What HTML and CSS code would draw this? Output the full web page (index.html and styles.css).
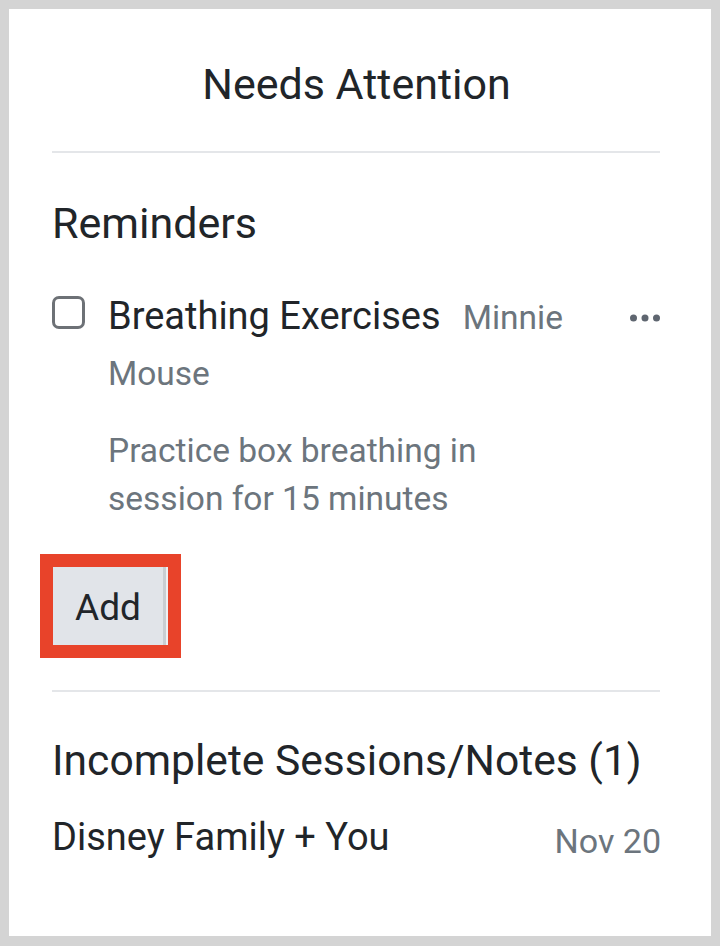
FILE: index.html
```html
<!DOCTYPE html>
<html lang="en">
<head>
<meta charset="utf-8">
<title>Needs Attention</title>
<link rel="stylesheet" href="styles.css">
</head>
<body>
<div class="card">
  <h1 class="title">Needs Attention</h1>
  <hr class="divider">
  <section class="section">
    <h2 class="section-title">Reminders</h2>
    <div class="reminder">
      <span class="checkbox" role="checkbox" aria-checked="false"></span>
      <div class="reminder-body">
        <p class="reminder-head"><span class="reminder-name">Breathing Exercises</span><span class="reminder-client">Minnie Mouse</span></p>
        <p class="reminder-desc">Practice box breathing in session for 15 minutes</p>
      </div>
      <button class="more" aria-label="More options">
        <svg width="32" height="8" viewBox="0 0 32 8" aria-hidden="true">
          <circle cx="3.5" cy="4" r="3.5" fill="#5f6670"/>
          <circle cx="15" cy="4" r="3.5" fill="#5f6670"/>
          <circle cx="26.5" cy="4" r="3.5" fill="#5f6670"/>
        </svg>
      </button>
    </div>
    <div class="add-highlight">
      <button class="add-btn">Add</button>
    </div>
  </section>
  <hr class="divider divider-lower">
  <section class="section">
    <h2 class="section-title section-title-sessions">Incomplete Sessions/Notes (1)</h2>
    <div class="session-row">
      <span class="session-name">Disney Family + You</span>
      <span class="session-date">Nov 20</span>
    </div>
  </section>
</div>
</body>
</html>
```

FILE: styles.css
```css
html, body {
  margin: 0;
  padding: 0;
}

body {
  background: #d4d4d4;
  font-family: Roboto, "Liberation Sans", sans-serif;
  color: #212529;
}

.card {
  box-sizing: border-box;
  margin: 9px 9px 10px 9px;
  height: 927px;
  background: #ffffff;
  padding: 50px 50px 0 43px;
}

.title {
  margin: 0;
  font-size: 43px;
  line-height: 50px;
  font-weight: 400;
  text-align: center;
}

.divider {
  margin: 42px 1px 0 0;
  border: 0;
  border-top: 2px solid #e4e6e9;
  height: 0;
}

.divider-lower {
  margin-top: 32px;
}

.section-title {
  margin: 45px 0 0 0;
  font-size: 43px;
  line-height: 50px;
  font-weight: 400;
}

.section-title-sessions {
  margin-top: 43px;
  font-size: 42.6px;
}

.reminder {
  display: flex;
  align-items: flex-start;
  margin-top: 41px;
}

.checkbox {
  box-sizing: border-box;
  flex: 0 0 auto;
  width: 33px;
  height: 33px;
  margin-top: 7px;
  border: 3px solid #6d7176;
  border-radius: 7px;
}

.reminder-body {
  flex: 0 0 470px;
  margin-left: 23px;
}

.reminder-head {
  margin: 0;
  font-size: 38px;
  line-height: 55px;
}

.reminder-name {
  color: #212529;
}

.reminder-client {
  font-size: 33.5px;
  color: #6c757d;
  margin-left: 22px;
}

.reminder-desc {
  margin: 26px 0 0 0;
  font-size: 33.5px;
  line-height: 48px;
  color: #6c757d;
}

.more {
  margin: 25px -1px 0 auto;
  padding: 0;
  border: 0;
  background: transparent;
  width: 32px;
  height: 8px;
  display: flex;
}

.add-highlight {
  display: inline-flex;
  margin-top: 31px;
  margin-left: -12px;
  border: 13px solid #e8432a;
}

.add-btn {
  box-sizing: border-box;
  width: 115px;
  height: 78px;
  padding: 2px 5px 0 0;
  border: 0;
  background: #e1e4e9;
  box-shadow: inset -2px 0 0 #eef0f3, inset -5px 0 0 #c9cdd2;
  font-family: Roboto, "Liberation Sans", sans-serif;
  font-size: 37px;
  color: #212529;
  display: flex;
  align-items: center;
  justify-content: center;
}

.session-row {
  display: flex;
  justify-content: space-between;
  align-items: flex-start;
  margin-top: 29px;
}

.session-name {
  font-size: 38px;
  line-height: 46px;
}

.session-date {
  font-size: 34px;
  line-height: 46px;
  margin-top: 4px;
  color: #6c757d;
}
```
